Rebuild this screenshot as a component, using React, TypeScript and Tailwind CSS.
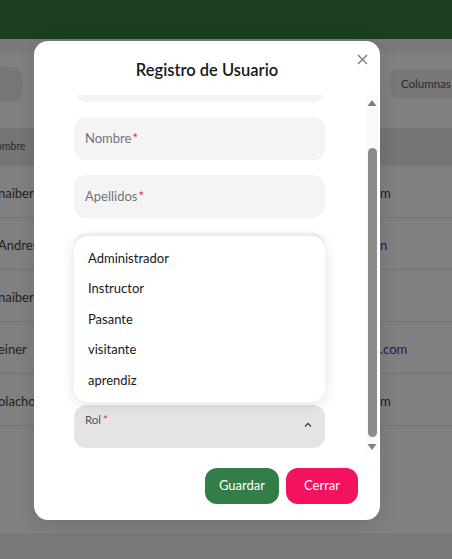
import React from "react";

const rowsLeft = ["naiber", "Andres", "naiber", "einer", "olacho"];
const rowsRight = ["m", "n", "", ".com", "m"];

function Field({ label }: { label: string }) {
  return (
    <div className="h-[43px] shrink-0 rounded-[12px] bg-[#f4f4f5] px-[11px] flex items-center text-[13px] text-[#71717a]">
      {label}
      {label && <span className="text-[#f31260] ml-[1px]">*</span>}
    </div>
  );
}

export default function App() {
  return (
    <div
      className="relative w-[452px] h-[559px] overflow-hidden bg-[#808080] flex flex-col"
      style={{ fontFamily: '"Segoe UI", Lato, "Noto Sans", sans-serif' }}
    >
      {/* background page */}
      <div className="h-[39px] shrink-0 bg-[#1c3f22]" />
      <div className="h-[14px] shrink-0 bg-[#7a7a7a]" />
      <div className="h-[75px] shrink-0 relative">
        <div className="absolute left-[-20px] top-[14px] w-[42px] h-[35px] rounded-[10px] bg-[#777777]" />
        <div className="absolute left-[390px] top-[16px] w-[80px] h-[29px] rounded-[8px] bg-[#777777] flex items-center pl-[11px] text-[11.5px] text-[#2b2b2b]">
          Columnas
        </div>
      </div>
      <div className="h-[38px] shrink-0 bg-[#737675] flex items-center text-[10.5px] text-[#2b2b2b]">
        <span className="ml-[-4px]">ombre</span>
      </div>
      {rowsLeft.map((r, i) => (
        <div key={i} className="h-[52px] shrink-0 border-b border-[#737373] flex items-center pt-[5px] text-[13px] text-[#1f1f1f]">
          <span className="ml-[-2px]">{r}</span>
          <span className="ml-auto w-[72px] text-[#15204a]">{rowsRight[i]}</span>
        </div>
      ))}
      <div className="flex-1" />
      <div className="h-[25px] shrink-0 border-t border-[#747474] bg-[#797a79]" />

      {/* modal */}
      <div className="absolute left-[34px] top-[41px] w-[346px] h-[479px] rounded-[14px] bg-white flex flex-col shadow-[0_4px_20px_rgba(0,0,0,0.12)]">
        <div className="h-[54px] shrink-0 flex items-center justify-center pt-[4px] text-[16.5px] font-semibold text-[#18181b]">
          Registro de Usuario
        </div>
        <button className="absolute left-[322px] top-[12px] w-[12px] h-[12px] flex items-center justify-center text-[#71717a]">
          <svg width="11" height="11" viewBox="0 0 11 11" fill="none" stroke="currentColor" strokeWidth="1.2">
            <path d="M1 1L10 10M10 1L1 10" />
          </svg>
        </button>

        <div className="relative h-[357px] shrink-0 overflow-hidden flex">
          <div className="pl-[40px] w-[291px] flex flex-col gap-[15px] mt-[-36px]">
            <Field label="" />
            <Field label="Nombre" />
            <Field label="Apellidos" />
            <Field label="" />
            <div className="h-[43px] shrink-0 -mt-[1px]" />
            <div className="h-[43px] shrink-0 -mt-[1px]" />
            <div className="h-[43px] shrink-0 rounded-[12px] bg-[#e4e4e7] px-[11px] pt-[7px] relative">
              <div className="text-[11.5px] text-[#52525b] leading-[16px]">
                Rol<span className="text-[#f31260] ml-[2px]">*</span>
              </div>
              <svg className="absolute right-[12px] top-[15px]" width="10" height="10" viewBox="0 0 10 10" fill="none" stroke="#3f3f46" strokeWidth="1.3">
                <path d="M2 6.5L5 3.5L8 6.5" />
              </svg>
            </div>
          </div>

          {/* dropdown */}
          <div className="absolute left-[40px] top-[141px] w-[251px] h-[166px] rounded-[14px] bg-white shadow-[0_2px_14px_rgba(0,0,0,0.12)] pt-[7px] pl-[14px] text-[13px] text-[#18181b]">
            {["Administrador", "Instructor", "Pasante", "visitante", "aprendiz"].map((o) => (
              <div key={o} className="h-[30.5px] flex items-center">{o}</div>
            ))}
          </div>

          {/* scrollbar */}
          <div className="ml-auto mr-[2px] w-[12px] h-full bg-[#fafafa] flex flex-col items-center">
            <svg className="mt-[4px]" width="10" height="8" viewBox="0 0 10 8">
              <path d="M5 1L9.5 7H0.5Z" fill="#808080" />
            </svg>
            <div className="mt-[41px] w-[9px] h-[289px] rounded-full bg-[#8c8c8c]" />
            <svg className="mt-[6px]" width="10" height="8" viewBox="0 0 10 8">
              <path d="M0.5 1H9.5L5 7Z" fill="#808080" />
            </svg>
          </div>
        </div>

        <div className="flex justify-end gap-[7px] pt-[16px] pr-[22px]">
          <button className="w-[74px] h-[36px] rounded-[12px] bg-[#327d48] text-white text-[13px]">Guardar</button>
          <button className="w-[72px] h-[36px] rounded-[12px] bg-[#f31260] text-white text-[13px]">Cerrar</button>
        </div>
      </div>
    </div>
  );
}
